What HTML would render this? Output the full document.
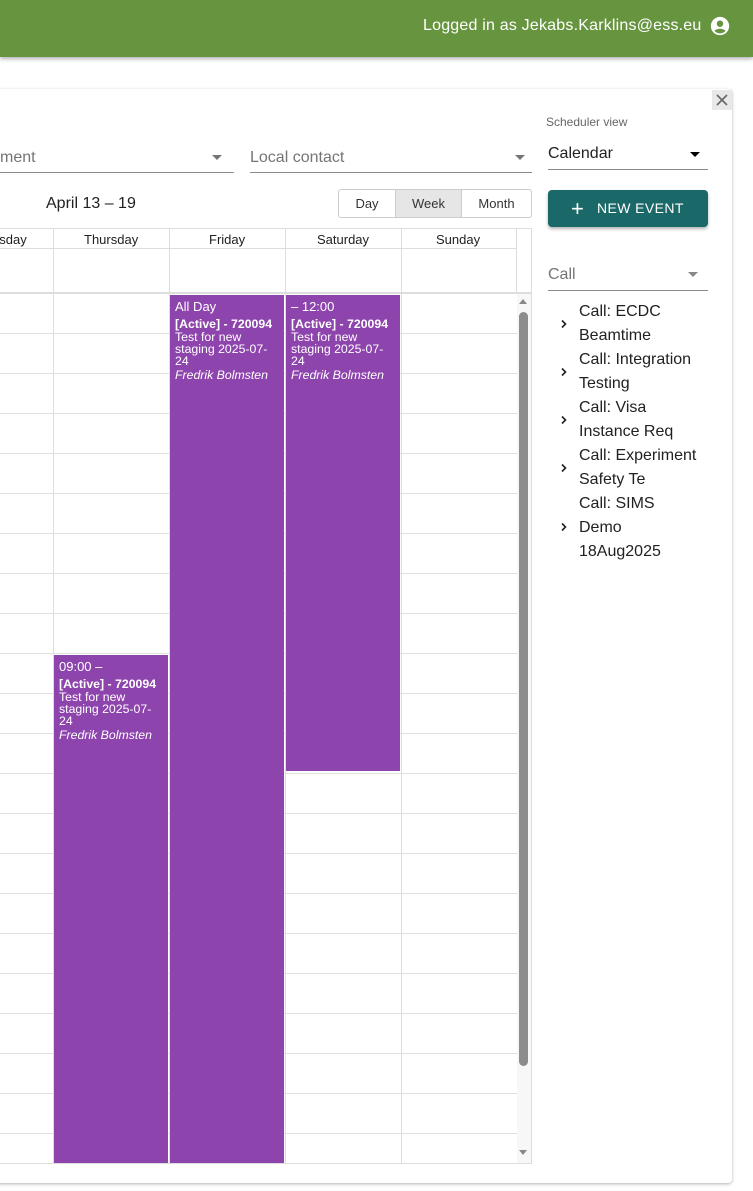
<!DOCTYPE html>
<html><head><style>
*{margin:0;padding:0;box-sizing:border-box}
body{width:753px;height:1191px;overflow:hidden;background:#fff;font-family:"Liberation Sans",sans-serif;position:relative;color:#212121}
.a{position:absolute}
.hdr{left:0;top:0;width:753px;height:57px;background:#67953f;box-shadow:0 2px 4px rgba(0,0,0,.3);color:#fff;font-size:16px}
.paper{left:-10px;top:89px;width:742px;height:1094px;border-radius:4px;box-shadow:0 1px 3px rgba(0,0,0,.3);background:#fff}
.sel{border-bottom:1px solid #8a8a8a;font-size:16px;color:#757575;padding-top:6px}
.tri{position:absolute;width:0;height:0;border-left:5px solid transparent;border-right:5px solid transparent;border-top:5px solid #757575}
.vl{width:1px;background:#ddd}
.hl{height:1px;background:#e0e0e0;left:0;width:517px}
.ev{background:#8e44ad;color:#fff;font-size:12.3px;padding:5px 5px;line-height:12px}
.ev .t{font-size:13px;margin-bottom:5px;line-height:13px}
.ev b{display:inline-block;margin-bottom:1px}
.ev i{display:inline-block;margin-top:2px}
.tree{font-size:16px;line-height:24px;color:#212121}
.chev{position:absolute;left:559px;width:10px;height:10px}
</style></head><body>
<div class="a hdr">
<div class="a" style="left:423px;top:17px;letter-spacing:0.2px">Logged in as Jekabs.Karklins@ess.eu</div>
<svg class="a" style="left:709px;top:15px" width="22" height="22" viewBox="0 0 24 24"><path fill="#fff" d="M12 2C6.48 2 2 6.480 2 12s4.48 10 10 10 10-4.48 10-10S17.52 2 12 2zm0 4c1.93 0 3.5 1.57 3.5 3.5S13.93 13 12 13s-3.5-1.57-3.5-3.5S10.07 6 12 6zm0 14c-2.03 0-4.430-.82-6.140-2.88C7.55 15.8 9.68 15 12 15s4.45.8 6.14 2.12C16.43 19.18 14.03 20 12 20z"/></svg>
</div>
<div class="a paper"></div>
<div class="a" style="left:712px;top:90px;width:20px;height:20px;background:#e8e8e8"></div>
<svg class="a" style="left:714px;top:92px" width="16" height="16" viewBox="0 0 16 16"><path d="M3 3L13 13M13 3L3 13" stroke="#666" stroke-width="1.6"/></svg>

<div class="a sel" style="left:0;top:143px;width:234px;height:30px">ment</div>
<div class="tri" style="left:212px;top:155px"></div>
<div class="a sel" style="left:250px;top:143px;width:282px;height:30px">Local contact</div>
<div class="tri" style="left:515px;top:155px"></div>
<div class="a" style="left:46px;top:195px;font-size:16px;color:#212121">April 13 – 19</div>
<div class="a" style="left:338px;top:189px;width:194px;height:29px;border:1px solid #ccc;border-radius:3px;font-size:13px;color:#333">
<div class="a" style="left:0;top:0;width:56px;height:27px;text-align:center;line-height:27px">Day</div>
<div class="a" style="left:56px;top:0;width:67px;height:27px;text-align:center;line-height:27px;background:#e6e6e6;border-left:1px solid #ccc;border-right:1px solid #ccc">Week</div>
<div class="a" style="left:123px;top:0;width:69px;height:27px;text-align:center;line-height:27px">Month</div>
</div>

<div class="a" style="left:0;top:228px;width:532px;height:936px;border:1px solid #ddd;border-left:none"></div>
<div class="a" style="left:0;top:248px;width:517px;height:1px;background:#ddd"></div>
<div class="a" style="left:0;top:292px;width:531px;height:2px;background:#ddd"></div>
<div class="a" style="left:0;top:232px;font-size:13px;width:517px">
<span class="a" style="left:-8px">esday</span>
<span class="a" style="left:84px">Thursday</span>
<span class="a" style="left:209px">Friday</span>
<span class="a" style="left:317px">Saturday</span>
<span class="a" style="left:436px">Sunday</span>
</div>
<div class="a vl" style="left:53px;top:229px;height:934px"></div>
<div class="a vl" style="left:169px;top:229px;height:934px"></div>
<div class="a vl" style="left:285px;top:229px;height:934px"></div>
<div class="a vl" style="left:401px;top:229px;height:934px"></div>
<div class="a vl" style="left:516px;top:229px;height:65px"></div>
<div class="a hl" style="top:333px"></div><div class="a hl" style="top:373px"></div><div class="a hl" style="top:413px"></div><div class="a hl" style="top:453px"></div><div class="a hl" style="top:493px"></div><div class="a hl" style="top:533px"></div><div class="a hl" style="top:573px"></div><div class="a hl" style="top:613px"></div><div class="a hl" style="top:653px"></div><div class="a hl" style="top:693px"></div><div class="a hl" style="top:733px"></div><div class="a hl" style="top:773px"></div><div class="a hl" style="top:813px"></div><div class="a hl" style="top:853px"></div><div class="a hl" style="top:893px"></div><div class="a hl" style="top:933px"></div><div class="a hl" style="top:973px"></div><div class="a hl" style="top:1013px"></div><div class="a hl" style="top:1053px"></div><div class="a hl" style="top:1093px"></div><div class="a hl" style="top:1133px"></div>
<div class="a" style="left:517px;top:294px;width:14px;height:869px;background:#f7f7f7"></div>
<div class="a" style="left:519px;top:312px;width:9px;height:754px;background:#8c8c8c;border-radius:5px"></div>
<div class="a" style="left:519px;top:299px;border-left:4px solid transparent;border-right:4px solid transparent;border-bottom:5px solid #888"></div>
<div class="a" style="left:519px;top:1150px;border-left:4px solid transparent;border-right:4px solid transparent;border-top:5px solid #888"></div>

<div class="a ev" style="left:170px;top:295px;width:114px;height:868px"><div class="t">All Day</div><b>[Active] - 720094</b><br>Test for new<br>staging 2025-07-<br>24<br><i>Fredrik Bolmsten</i></div>
<div class="a ev" style="left:286px;top:295px;width:114px;height:476px"><div class="t">– 12:00</div><b>[Active] - 720094</b><br>Test for new<br>staging 2025-07-<br>24<br><i>Fredrik Bolmsten</i></div>
<div class="a ev" style="left:54px;top:655px;width:114px;height:508px"><div class="t">09:00 –</div><b>[Active] - 720094</b><br>Test for new<br>staging 2025-07-<br>24<br><i>Fredrik Bolmsten</i></div>

<div class="a" style="left:546px;top:115px;font-size:12px;color:#666">Scheduler view</div>
<div class="a sel" style="left:548px;top:143px;width:160px;height:27px;color:#212121;padding-top:2px">Calendar</div>
<div class="tri" style="left:690px;top:152px;border-top-color:#000"></div>
<div class="a" style="left:548px;top:190px;width:160px;height:37px;background:#1b6869;border-radius:4px;box-shadow:0 2px 3px rgba(0,0,0,.3);color:#fff;font-size:14px;line-height:37px;letter-spacing:.4px">
<span class="a" style="left:23px;top:0;font-size:22px">+</span><span class="a" style="left:49px">NEW EVENT</span></div>
<div class="a sel" style="left:548px;top:264px;width:160px;height:27px;padding-top:2px">Call</div>
<div class="tri" style="left:688px;top:272px;border-top-color:#888"></div>
<div class="a tree" style="left:579px;top:300px">Call: ECDC<br>Beamtime<br>Call: Integration<br>Testing<br>Call: Visa<br>Instance Req<br>Call: Experiment<br>Safety Te<br>Call: SIMS<br>Demo<br>18Aug2025</div>
<svg class="chev" style="top:319px" viewBox="0 0 10 10"><path d="M3 1.5L6.5 5 3 8.5" stroke="#222" stroke-width="1.6" fill="none"/></svg>
<svg class="chev" style="top:367px" viewBox="0 0 10 10"><path d="M3 1.5L6.5 5 3 8.5" stroke="#222" stroke-width="1.6" fill="none"/></svg>
<svg class="chev" style="top:415px" viewBox="0 0 10 10"><path d="M3 1.5L6.5 5 3 8.5" stroke="#222" stroke-width="1.6" fill="none"/></svg>
<svg class="chev" style="top:463px" viewBox="0 0 10 10"><path d="M3 1.5L6.5 5 3 8.5" stroke="#222" stroke-width="1.6" fill="none"/></svg>
<svg class="chev" style="top:522px" viewBox="0 0 10 10"><path d="M3 1.5L6.5 5 3 8.5" stroke="#222" stroke-width="1.6" fill="none"/></svg>
</body></html>
